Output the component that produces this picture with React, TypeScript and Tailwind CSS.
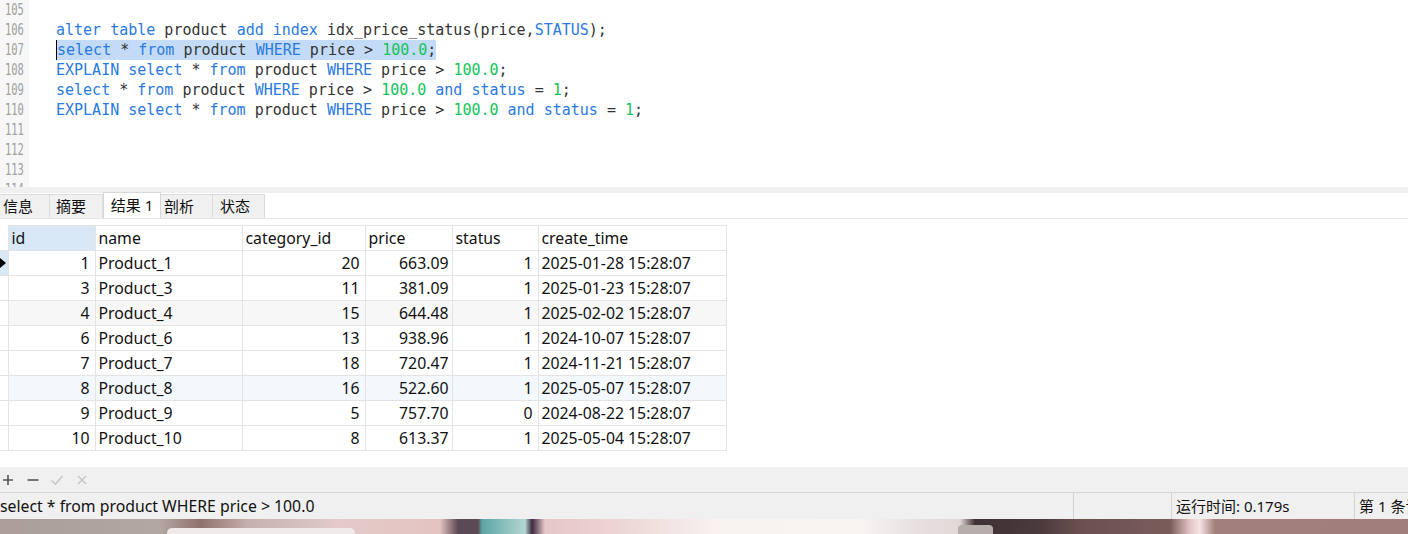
import React from "react";

const KW = "text-[#2a7ae2]";
const ID = "text-[#333333]";
const NUM = "text-[#13c45a]";

type Tok = [string, string];

const k = (s: string): Tok => [s, KW];
const i = (s: string): Tok => [s, ID];
const n = (s: string): Tok => [s, NUM];

const codeLines: { no: number; toks: Tok[]; sel?: boolean }[] = [
  { no: 105, toks: [] },
  {
    no: 106,
    toks: [k("alter"), i(" "), k("table"), i(" product "), k("add"), i(" "), k("index"), i(" idx_price_status(price,"), k("STATUS"), i(");")],
  },
  {
    no: 107,
    sel: true,
    toks: [k("select"), i(" * "), k("from"), i(" product "), k("WHERE"), i(" price > "), n("100.0"), i(";")],
  },
  {
    no: 108,
    toks: [k("EXPLAIN"), i(" "), k("select"), i(" * "), k("from"), i(" product "), k("WHERE"), i(" price > "), n("100.0"), i(";")],
  },
  {
    no: 109,
    toks: [k("select"), i(" * "), k("from"), i(" product "), k("WHERE"), i(" price > "), n("100.0"), i(" "), k("and"), i(" "), k("status"), i(" = "), n("1"), i(";")],
  },
  {
    no: 110,
    toks: [k("EXPLAIN"), i(" "), k("select"), i(" * "), k("from"), i(" product "), k("WHERE"), i(" price > "), n("100.0"), i(" "), k("and"), i(" "), k("status"), i(" = "), n("1"), i(";")],
  },
  { no: 111, toks: [] },
  { no: 112, toks: [] },
  { no: 113, toks: [] },
  { no: 114, toks: [] },
];

const rows = [
  ["1", "Product_1", "20", "663.09", "1", "2025-01-28 15:28:07"],
  ["3", "Product_3", "11", "381.09", "1", "2025-01-23 15:28:07"],
  ["4", "Product_4", "15", "644.48", "1", "2025-02-02 15:28:07"],
  ["6", "Product_6", "13", "938.96", "1", "2024-10-07 15:28:07"],
  ["7", "Product_7", "18", "720.47", "1", "2024-11-21 15:28:07"],
  ["8", "Product_8", "16", "522.60", "1", "2025-05-07 15:28:07"],
  ["9", "Product_9", "5", "757.70", "0", "2024-08-22 15:28:07"],
  ["10", "Product_10", "8", "613.37", "1", "2025-05-04 15:28:07"],
];

const rowBg = ["bg-white", "bg-white", "bg-[#f7f7f7]", "bg-white", "bg-white", "bg-[#f3f8fd]", "bg-white", "bg-white"];

const tabs = ["信息", "摘要", "结果 1", "剖析", "状态"];
const tabW = ["w-[50px]", "w-[53px]", "w-[58px]", "w-[52px]", "w-[52px]"];

const UI = "font-['Noto_Sans','Noto_Sans_CJK_SC',sans-serif]";

export default function App() {
  return (
    <div className={`w-[1408px] h-[534px] flex flex-col bg-white overflow-hidden ${UI}`}>
      {/* Editor */}
      <div className="h-[187px] flex overflow-hidden shrink-0">
        <div className="w-[29px] bg-[#f7f7f7] flex flex-col shrink-0">
          {codeLines.map((l) => (
            <div
              key={l.no}
              className="h-[20px] leading-[20px] pl-[7px] text-[15px] text-[#a0a0a0] font-['DejaVu_Sans_Mono',monospace] whitespace-pre origin-left scale-x-[0.7]"
            >
              {l.no}
            </div>
          ))}
        </div>
        <div className="flex-1 flex flex-col pl-[27px]">
          {codeLines.map((l) => (
            <div key={l.no} className="h-[20px] flex">
              <div
                className={`h-[20px] leading-[20px] text-[15px] font-['DejaVu_Sans_Mono',monospace] whitespace-pre ${
                  l.sel ? "bg-[#c3dbf6] border-l border-black" : ""
                }`}
              >
                {l.toks.map((t, j) => (
                  <span key={j} className={t[1]}>
                    {t[0]}
                  </span>
                ))}
              </div>
            </div>
          ))}
        </div>
      </div>

      {/* Splitter */}
      <div className="h-[6px] bg-[#f0f0f0] shrink-0" />

      {/* Tabs */}
      <div className="h-[26px] flex items-end border-b border-[#e6e6e6] shrink-0">
        {tabs.map((t, idx) => (
          <div
            key={t}
            className={`${tabW[idx]} flex items-center text-[15px] ${
              idx === 2
                ? "h-[26px] bg-white border border-b-0 border-[#d8d8d8] justify-center text-[#111]"
                : "h-[24px] bg-[#f0f0f0] border-r border-t border-[#dcdcdc] pl-[3px] text-[#111]"
            } ${idx === 0 ? "pl-[2px]" : ""} ${idx === 1 ? "pl-[6px]" : ""} ${idx === 4 ? "pl-[7px]" : ""}`}
          >
            {t}
          </div>
        ))}
      </div>

      {/* Table */}
      <div className="pt-[6px] shrink-0">
        <table className="border-collapse table-fixed text-[15.8px] text-[#111]">
          <colgroup>
            <col className="w-[8px]" />
            <col className="w-[87px]" />
            <col className="w-[147px]" />
            <col className="w-[123px]" />
            <col className="w-[87px]" />
            <col className="w-[86px]" />
            <col className="w-[188px]" />
          </colgroup>
          <thead>
            <tr className="h-[25px]">
              <th className="border-b border-[#e4e4e4] p-0" />
              <th className="bg-[#d9e8f7] border border-[#e4e4e4] text-left font-normal pl-[3px] py-0 leading-[24px]">id</th>
              <th className="border border-[#e4e4e4] text-left font-normal pl-[3px] py-0 leading-[24px]">name</th>
              <th className="border border-[#e4e4e4] text-left font-normal pl-[3px] py-0 leading-[24px]">category_id</th>
              <th className="border border-[#e4e4e4] text-left font-normal pl-[3px] py-0 leading-[24px]">price</th>
              <th className="border border-[#e4e4e4] text-left font-normal pl-[3px] py-0 leading-[24px]">status</th>
              <th className="border border-[#e4e4e4] text-left font-normal pl-[3px] py-0 leading-[24px]">create_time</th>
            </tr>
          </thead>
          <tbody>
            {rows.map((r, idx) => (
              <tr key={idx} className={`h-[25px] ${rowBg[idx]}`}>
                <td className={`border border-l-0 border-[#e4e4e4] p-0 relative ${idx === 0 ? "bg-[#d9e8f7]" : "bg-white"}`}>
                  {idx === 0 && (
                    <svg className="absolute left-0 top-[7px]" width="6" height="10" viewBox="0 0 6 10">
                      <path d="M0 0 L6 5 L0 10 Z" fill="#000" />
                    </svg>
                  )}
                </td>
                <td className="border border-[#e4e4e4] text-right pr-[5px] py-0 leading-[24px]">{r[0]}</td>
                <td className="border border-[#e4e4e4] text-left pl-[3px] py-0 leading-[24px]">{r[1]}</td>
                <td className="border border-[#e4e4e4] text-right pr-[5px] py-0 leading-[24px]">{r[2]}</td>
                <td className="border border-[#e4e4e4] text-right pr-[3px] py-0 leading-[24px]">{r[3]}</td>
                <td className="border border-[#e4e4e4] text-right pr-[5px] py-0 leading-[24px]">{r[4]}</td>
                <td className="border border-[#e4e4e4] text-left pl-[3px] py-0 leading-[24px]">{r[5]}</td>
              </tr>
            ))}
          </tbody>
        </table>
      </div>

      <div className="flex-1" />

      {/* Toolbar */}
      <div className="h-[26px] bg-[#f0f0f0] flex items-center gap-[10px] pl-[1px] shrink-0 border-b border-[#d6d6d6]">
        <svg width="14" height="14" viewBox="0 0 14 14">
          <path d="M7 2 V12 M2 7 H12" stroke="#555" strokeWidth="1.6" />
        </svg>
        <svg width="14" height="14" viewBox="0 0 14 14" className="ml-[1px]">
          <path d="M1.5 7 H12.5" stroke="#555" strokeWidth="1.6" />
        </svg>
        <svg width="14" height="14" viewBox="0 0 14 14">
          <path d="M1.5 7.5 L5.5 11 L12.5 3" stroke="#c8c8c8" strokeWidth="1.6" fill="none" />
        </svg>
        <svg width="14" height="14" viewBox="0 0 14 14" className="ml-[1px]">
          <path d="M3 3 L11 11 M11 3 L3 11" stroke="#c8c8c8" strokeWidth="1.6" />
        </svg>
      </div>

      {/* Status bar */}
      <div className="h-[26px] bg-[#f0f0f0] flex items-center text-[15.8px] text-[#111] shrink-0">
        <div className="w-[1073px] whitespace-pre pt-[1px]">select * from product WHERE price &gt; 100.0</div>
        <div className="w-[98px] h-full border-l border-[#d4d4d4]" />
        <div className="w-[183px] h-full border-l border-[#d4d4d4] flex items-center pl-[4px] pt-[1px] text-[15px] whitespace-pre">运行时间: 0.179s</div>
        <div className="flex-1 h-full border-l border-[#d4d4d4] flex items-center pl-[4px] pt-[1px] text-[15px] whitespace-pre overflow-hidden">第 1 条记录</div>
      </div>

      {/* Wallpaper strip */}
      <div className="h-[15px] shrink-0 relative overflow-hidden bg-[linear-gradient(90deg,#ab9e9a_0px,#b3a7a3_160px,#8f716c_200px,#c7b1af_250px,#e2cbca_340px,#e4c3c0_440px,#5b4a55_458px,#5b4a55_478px,#5aa6a6_482px,#b5d5d0_525px,#3d2a40_532px,#e6c6c6_545px,#ecd6d4_620px,#f8f3f1_720px,#f8f4f2_860px,#e6dfdf_920px,#e2d8d8_960px,#3f3034_975px,#4a3a3d_1040px,#6b5050_1080px,#7a5d5b_1170px,#e2c4c4_1190px,#f4e2e2_1200px,#a27f7b_1215px,#a27e7a_1408px)]">
        <div className="absolute left-[167px] top-[9px] w-[188px] h-[10px] rounded-[6px] bg-[#efebea]" />
        <div className="absolute left-[958px] top-[6px] w-[35px] h-[12px] rounded-[4px] bg-[#b7adab]" />
      </div>
    </div>
  );
}
